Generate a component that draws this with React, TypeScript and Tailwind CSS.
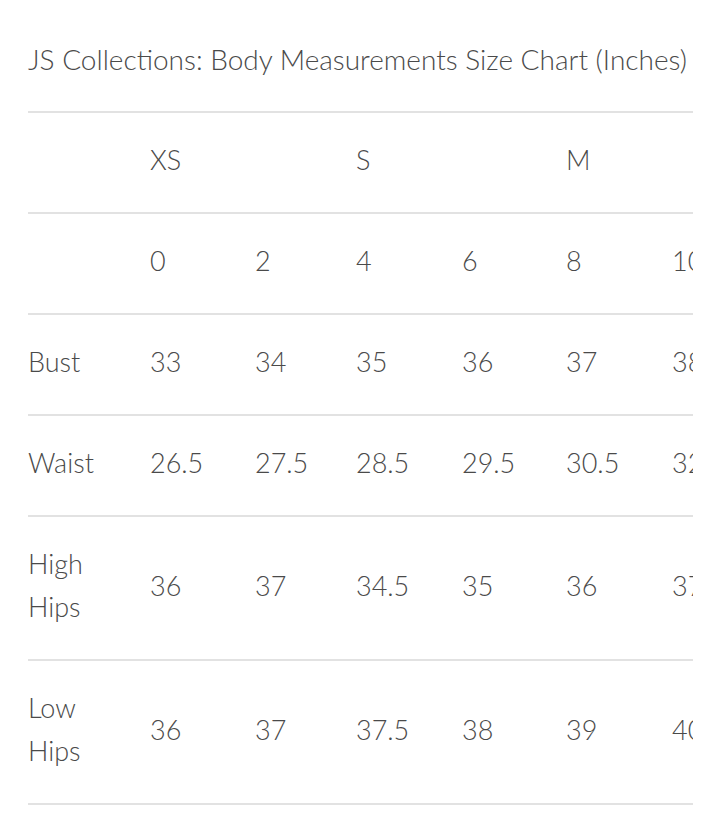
const sizes = [
  { label: "XS", span: 2 },
  { label: "S", span: 2 },
  { label: "M", span: 2 },
];

const numbers = ["0", "2", "4", "6", "8", "10"];

const rows: { label: string[]; values: string[] }[] = [
  { label: ["Bust"], values: ["33", "34", "35", "36", "37", "38"] },
  { label: ["Waist"], values: ["26.5", "27.5", "28.5", "29.5", "30.5", "32"] },
  { label: ["High", "Hips"], values: ["36", "37", "34.5", "35", "36", "37"] },
  { label: ["Low", "Hips"], values: ["36", "37", "37.5", "38", "39", "40"] },
];

const colWidths = ["w-[122px]", "w-[105px]", "w-[101px]", "w-[106px]", "w-[104px]", "w-[106px]", "w-[106px]"];

export default function App() {
  return (
    <div
      className="min-h-[830px] bg-white px-[28px] pt-[39px] text-[#4a4a4a] font-light"
      style={{ fontFamily: "Lato, 'Open Sans', sans-serif" }}
    >
      <h1 className="text-[28px] leading-[40px] font-light whitespace-nowrap">
        JS Collections: Body Measurements Size Chart (Inches)
      </h1>

      <div className="mt-[32px] w-[665px] overflow-hidden">
        <table className="table-fixed border-collapse w-[750px] text-[27px] leading-[43px]">
          <colgroup>
            {colWidths.map((w, i) => (
              <col key={i} className={w} />
            ))}
          </colgroup>
          <tbody>
            <tr className="border-t-2 border-[#e2e2e2]">
              <td className="pt-[25px] pb-[31px]" />
              {sizes.map((s) => (
                <td key={s.label} colSpan={s.span} className="pt-[25px] pb-[31px] text-left align-middle">
                  {s.label}
                </td>
              ))}
            </tr>
            <tr className="border-t-2 border-[#e2e2e2]">
              <td className="pt-[25px] pb-[31px]" />
              {numbers.map((n) => (
                <td key={n} className="pt-[25px] pb-[31px] text-left align-middle whitespace-nowrap">
                  {n}
                </td>
              ))}
            </tr>
            {rows.map((r) => (
              <tr key={r.label.join(" ")} className="border-t-2 border-[#e2e2e2]">
                <td className="pt-[25px] pb-[31px] align-middle">
                  {r.label.map((l) => (
                    <div key={l}>{l}</div>
                  ))}
                </td>
                {r.values.map((v, i) => (
                  <td key={i} className="pt-[25px] pb-[31px] text-left align-middle whitespace-nowrap">
                    {v}
                  </td>
                ))}
              </tr>
            ))}
            <tr className="border-t-2 border-[#e2e2e2]">
              <td colSpan={7} />
            </tr>
          </tbody>
        </table>
      </div>
    </div>
  );
}
